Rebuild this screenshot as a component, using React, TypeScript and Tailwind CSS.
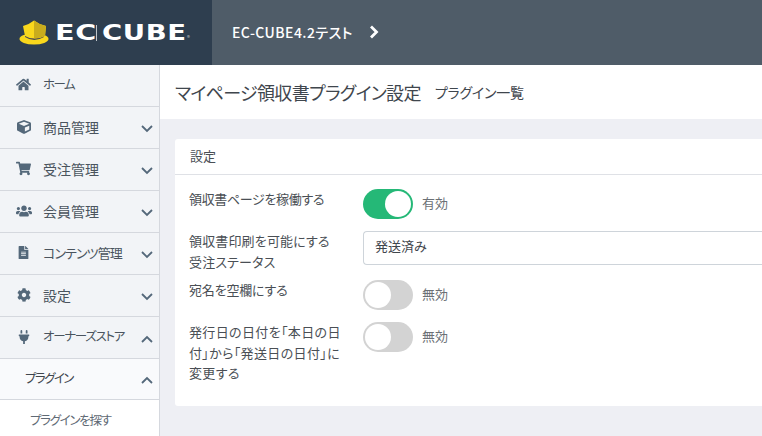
import React from "react";
import { FaHome, FaCube, FaShoppingCart, FaUsers, FaFileAlt, FaCog, FaPlug } from "react-icons/fa";

const font = "font-['Noto_Sans_CJK_JP','Noto_Sans',sans-serif] [font-feature-settings:'palt']";

function Chevron({ up = false }: { up?: boolean }) {
  return (
    <svg width="12" height="8" viewBox="0 0 12 8" className="absolute right-[6px] top-1/2 mt-[1px] -translate-y-1/2">
      <path d={up ? "M1 7 L6 2 L11 7" : "M1 1 L6 6 L11 1"} fill="none" stroke="#54687a" strokeWidth="1.8" />
    </svg>
  );
}

function NavRow({ icon, label, labelClass, chevron, up }: { icon: React.ReactNode; label: string; labelClass: string; chevron?: boolean; up?: boolean }) {
  return (
    <div className="relative flex h-[42px] shrink-0 items-center border-b border-[#d5d8de] bg-[#f2f4f7]">
      <span className="flex w-[43px] shrink-0 justify-center pl-[4px] pb-[2px] text-[#54687a]">{icon}</span>
      <span className={`text-[#4a545e] ${labelClass}`}>{label}</span>
      {chevron && <Chevron up={up} />}
    </div>
  );
}

function Toggle({ on }: { on?: boolean }) {
  return (
    <div className={`flex h-[30px] w-[50px] shrink-0 items-center rounded-full px-[2px] ${on ? "justify-end bg-[#25b877]" : "justify-start bg-[#d3d3d3]"}`}>
      <div className="h-[26px] w-[26px] rounded-full bg-white" />
    </div>
  );
}

function Logo() {
  return (
    <div className="flex h-[65px] w-[212px] shrink-0 items-center bg-[#2e3e4f] pl-[19px]">
      <svg width="31" height="26" viewBox="0 0 31 26" className="mr-[5px]">
        <ellipse cx="15" cy="19" rx="14.5" ry="5.5" fill="#f9d71c" />
        <path d="M6 17 Q15 23 25 17 L25 15 L6 15 Z" fill="#4b4a4f" />
        <path d="M4 6 Q10 4.500 15 0.500 Q20 4.500 27 6 L26 16 Q15 21 6 16 Z" fill="#f9d71c" />
        <path d="M15 0.500 Q20 4.500 27 6 L26 16 Q21 18.200 15 18.500 Z" fill="#c9ac1d" />
      </svg>
      <span className="inline-block w-[37px] origin-left scale-x-[1.3] font-['DejaVu_Sans',sans-serif] text-[22px] leading-none font-bold tracking-[0.5px] text-white">EC</span>
      <span className="mr-[5px] ml-[4px] h-[16px] w-px bg-white/70" />
      <span className="inline-block w-[84px] origin-left scale-x-[1.25] font-['DejaVu_Sans',sans-serif] text-[22px] leading-none font-bold tracking-[0.5px] text-white">CUBE</span>
      <span className="mt-[10px] ml-[1px] text-[6px] text-white/70">®</span>
    </div>
  );
}

function Row({ label, className, children }: { label: React.ReactNode; className?: string; children: React.ReactNode }) {
  return (
    <div className={`flex ${className ?? ""}`}>
      <div className="w-[174px] shrink-0 pr-[22px] text-[13px] leading-[20.5px] text-[#4a4f55]">{label}</div>
      <div className="flex min-w-0 flex-1 items-start">{children}</div>
    </div>
  );
}

function ToggleValue({ on, text }: { on?: boolean; text: string }) {
  return (
    <div className="flex items-center">
      <Toggle on={on} />
      <span className="ml-[9px] pb-[2px] text-[13px] text-[#6b7075]">{text}</span>
    </div>
  );
}

export default function App() {
  return (
    <div className={`flex h-[436px] w-[762px] flex-col overflow-hidden bg-white ${font}`}>
      <header className="flex h-[65px] shrink-0">
        <Logo />
        <div className="flex flex-1 items-center bg-[#4f5c68] pl-[20px] text-white">
          <span className="text-[14px] font-medium tracking-[0.45px]">EC-CUBE4.2テスト</span>
          <svg width="10" height="14" viewBox="0 0 10 14" className="ml-[16px] mb-[2px]">
            <path d="M2 1.500 L7.500 7 L2 12.500" fill="none" stroke="#fff" strokeWidth="2.800" />
          </svg>
        </div>
      </header>
      <div className="flex min-h-0 flex-1">
        <aside className="flex w-[160px] shrink-0 flex-col overflow-hidden border-r border-[#d5d8de] bg-white">
          <NavRow icon={<FaHome size={15} />} label="ホーム" labelClass="pb-[2px] text-[12.5px] tracking-[-1.6px]" />
          <NavRow icon={<FaCube size={14} />} label="商品管理" labelClass="text-[14px]" chevron />
          <NavRow icon={<FaShoppingCart size={15} />} label="受注管理" labelClass="text-[14px]" chevron />
          <NavRow icon={<FaUsers size={16} />} label="会員管理" labelClass="text-[14px]" chevron />
          <NavRow icon={<FaFileAlt size={13} />} label="コンテンツ管理" labelClass="pb-[2px] text-[13px] tracking-[-0.9px]" chevron />
          <NavRow icon={<FaCog size={14} />} label="設定" labelClass="text-[14px]" chevron />
          <NavRow icon={<FaPlug size={14} />} label="オーナーズストア" labelClass="pb-[2px] text-[12.5px] tracking-[-1.3px]" chevron up />
          <div className="relative flex h-[41px] shrink-0 items-center border-b border-[#d5d8de] bg-[#f9fafc] pl-[25px]">
            <span className="pb-[1px] text-[12.5px] tracking-[-1.6px] text-[#3f464d]">プラグイン</span>
            <Chevron up />
          </div>
          <div className="flex h-[40px] shrink-0 items-center pl-[30px] text-[12.5px] tracking-[-1.3px] text-[#5f6a75]">プラグインを探す</div>
        </aside>
        <main className="flex min-w-0 flex-1 flex-col bg-[#eeeff4]">
          <div className="flex h-[54px] shrink-0 items-center bg-white pl-[15px]">
            <h1 className="text-[18px] font-normal tracking-[-0.65px] text-[#3f464d]">マイページ領収書プラグイン設定</h1>
            <span className="ml-[14px] text-[14px] tracking-[-0.2px] text-[#3f464d]">プラグイン一覧</span>
          </div>
          <section className="mt-[20px] ml-[15px] h-[267px] rounded-l-[3px] bg-white">
            <div className="flex h-[36px] items-center border-b border-[#dfe1e6] pl-[15px] pb-[2px] text-[13px] text-[#4a4f55]">設定</div>
            <div className="flex flex-col pt-[14px] pl-[14px]">
              <Row label={<span className="tracking-[-0.35px]">領収書ページを稼働する</span>} className="h-[42px]">
                <ToggleValue on text="有効" />
              </Row>
              <Row label={<span className="tracking-[0.15px]">領収書印刷を可能にする<br />受注ステータス</span>} className="h-[49px]">
                <div className="flex h-[34px] flex-1 items-center rounded-l-[4px] border border-r-0 border-[#ced4da] pl-[11px] pb-[4px] text-[13px] text-[#3f464d]">発送済み</div>
              </Row>
              <Row label={<span className="tracking-[-0.2px]">宛名を空欄にする</span>} className="h-[42px]">
                <ToggleValue text="無効" />
              </Row>
              <Row label={<span className="tracking-[0.35px]">発行日の日付を「本日の日付」から「発送日の日付」に変更する</span>}>
                <ToggleValue text="無効" />
              </Row>
            </div>
          </section>
        </main>
      </div>
    </div>
  );
}
